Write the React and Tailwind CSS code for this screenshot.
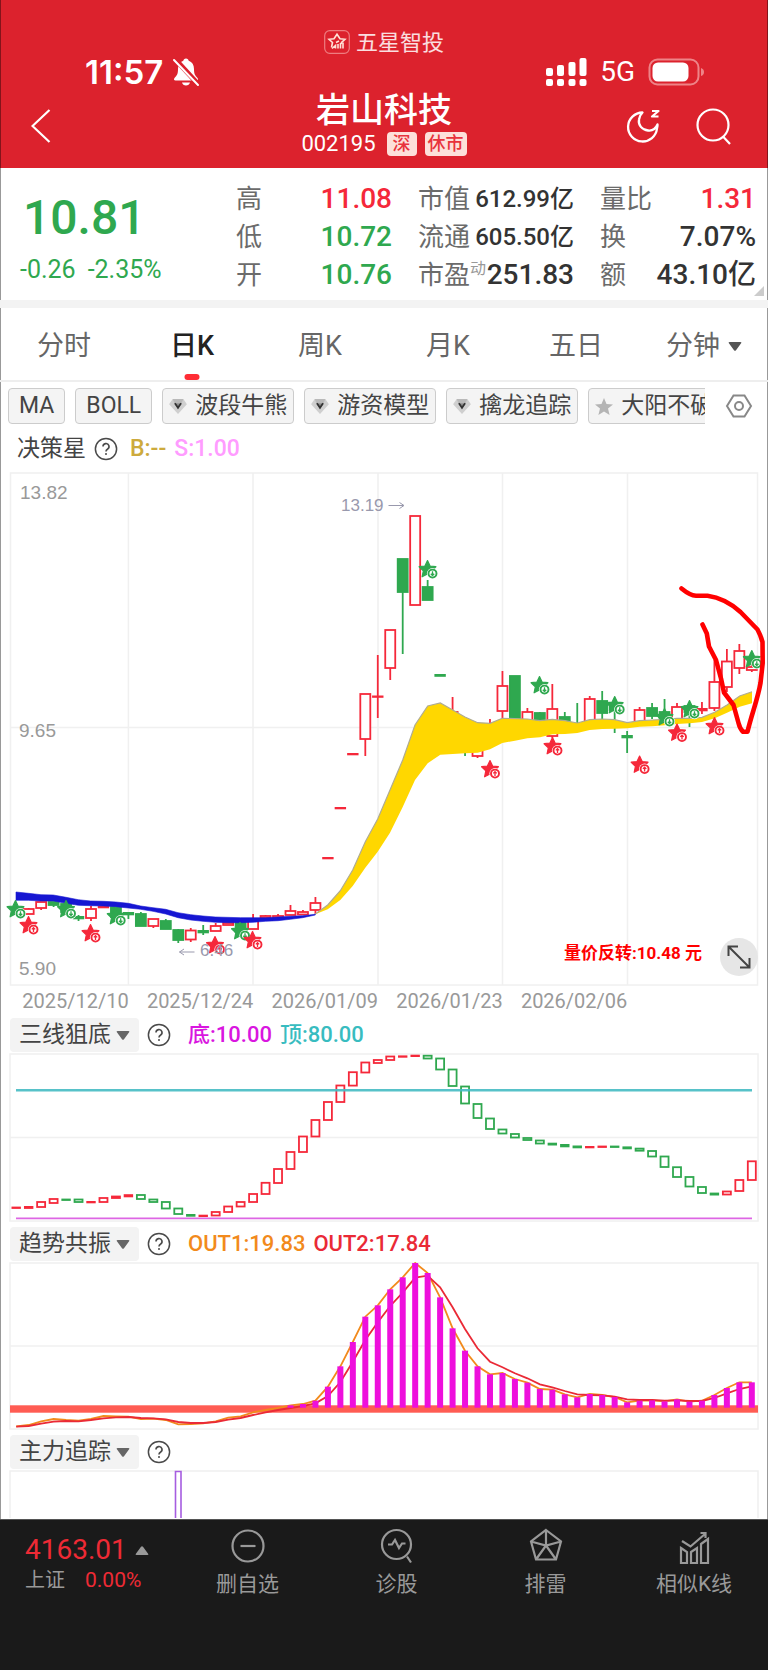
import React, { useState } from 'react';

const RED = '#f5283a';
const GREEN = '#2fa84f';

// x position of the n-th trading day, shared by all charts
const dayX = (i) => 16.2 + i * 12.468;

// [day, body top, body bottom, high, low, color]
const CANDLES = [
  [1, 909, 914, 908, 914, 'r'],
  [2, 902, 908, 902, 910, 'r'],
  [3, 902, 905, 902, 907, 'g'],
  [4, 904, 912, 904, 914, 'g'],
  [5, 917, 918, 915, 921, 'g'],
  [6, 909, 918, 906, 921, 'r'],
  [7, 907, 907, 907, 907, 'r'],
  [8, 907, 917, 907, 917, 'g'],
  [9, 913, 914, 912, 919, 'g'],
  [10, 914, 926, 912, 926, 'g'],
  [11, 919, 926, 919, 928, 'r'],
  [12, 921, 929, 919, 929, 'g'],
  [13, 930, 940, 929, 943, 'g'],
  [14, 930.5, 939.5, 928, 942, 'r'],
  [15, 931, 932, 925, 935, 'g'],
  [16, 926, 931, 923, 931, 'r'],
  [17, 923, 925, 923, 925, 'r'],
  [18, 922, 932, 922, 932, 'g'],
  [19, 919, 929, 914, 929, 'r'],
  [20, 916, 918, 915, 918, 'r'],
  [21, 916, 918, 914, 918, 'r'],
  [22, 911, 915, 905, 915, 'r'],
  [23, 912, 914.5, 910, 915, 'r'],
  [24, 903, 910, 897, 914, 'r'],
  [25, 858, 858, 858, 858, 'r'],
  [26, 808, 808, 808, 808, 'r'],
  [27, 754, 754, 754, 754, 'r'],
  [28, 694, 739, 694, 756, 'r'],
  [29, 696.5, 696.5, 655, 718, 'r'],
  [30, 630, 668, 630, 680, 'r'],
  [31, 559, 592, 559, 654, 'g'],
  [32, 516, 605, 516, 605, 'r'],
  [33, 587, 600, 580, 600, 'g'],
  [34, 675, 675.5, 675, 675, 'g'],
  [35, 712, 725, 697, 725, 'r'],
  [36, 740, 752, 740, 756, 'g'],
  [37, 744, 756, 744, 758, 'r'],
  [38, 727, 732, 719, 732, 'r'],
  [39, 686, 711, 671, 718, 'r'],
  [40, 676, 720, 676, 720, 'g'],
  [41, 712, 722, 708, 722, 'r'],
  [42, 713, 721, 712, 721, 'g'],
  [43, 709, 736, 684, 738, 'r'],
  [44, 717, 724, 712, 724, 'g'],
  [45, 725, 727, 703, 727, 'g'],
  [46, 699, 722, 696, 722, 'r'],
  [47, 701, 713, 691, 719, 'g'],
  [48, 703, 710, 700, 733, 'g'],
  [49, 736, 737, 731, 753, 'g'],
  [50, 710, 724, 707, 724, 'r'],
  [51, 708, 716, 703, 719, 'g'],
  [52, 712, 720, 699, 724, 'g'],
  [53, 707, 722, 703, 722, 'r'],
  [54, 706, 712, 704, 727, 'g'],
  [55, 709, 710, 702, 714, 'r'],
  [56, 682, 708, 660, 711, 'r'],
  [57, 661.5, 687, 649, 692, 'r'],
  [58, 651, 668, 644, 674, 'r'],
  [59, 667, 670, 657, 672, 'r'],
];

// signal stars on the price chart: [x, y, color]
const STARS = [
  [15.5, 909, 'g'], [66, 909, 'g'], [115.7, 916, 'g'], [240, 931, 'g'],
  [28.5, 925, 'r'], [90.5, 933, 'r'], [215, 945, 'r'], [252.5, 940, 'r'],
  [427.5, 569, 'g'], [539.5, 685, 'g'], [614.7, 705, 'g'], [664.5, 717, 'g'],
  [689.5, 709, 'g'], [751.8, 659, 'g'],
  [490, 769, 'r'], [552.5, 746, 'r'], [639.6, 764.5, 'r'], [677, 732.5, 'r'], [714.5, 726, 'r'],
];

const YELLOW_TOP =
  '315.3,914 327.7,905 340.3,890.7 352.7,870 365.3,841.7 377.7,819 390,790 402.7,760 415,725 427.7,706 440.3,703 452.7,710 465,717 477.7,722.7 490,723.3 502.3,718.3 527.3,719 540,720.7 552.3,719.3 565,720.7 577.3,723 589.7,719.7 602.3,719 614.7,719.7 627.3,722.7 639.7,720.7 652.3,720 664.7,719.3 677,718.3 689.7,718.3 702,717.3 714.7,712.3 727,705 739.7,696 752,691.7';
const YELLOW_BOTTOM =
  '752,703.3 739.7,706.7 727,712.7 714.7,718.3 702,722 689.7,723.3 677,724 664.7,725.3 652.3,726.3 639.7,726.7 627.3,728.3 614.7,728.7 602.3,729 589.7,730 577.3,733 565,734 552.3,734.3 540,737.3 527.3,738.3 515,740.7 502.3,743 490,749.3 477.7,752.7 465,753.3 452.7,754 440.3,754.7 427.7,763.3 415,780 402.7,807 390,832.7 377.7,851.7 365.3,867.7 352.7,886 340.3,900 327.7,909.3 315.3,914.3';
const BLUE_BAND =
  '16,892 28.3,893.3 41,894.7 53.3,895 66,897.3 78.3,899.7 90.7,901 103.3,901.3 115.7,902 128.3,903.3 140.7,906 153,907.7 165.7,909.3 178,912.7 190.7,914.7 203,916 215.3,917 240.3,917.7 265.3,917.7 278,917 290.3,916.3 302.7,915.7 315.3,914.3 315.3,915 302.7,917.7 290.3,919.3 278,920.7 265.3,921.3 253,922.3 240.3,922.7 228,922.7 215.3,922.3 203,921.3 190.7,920 178,917.7 165.7,914 153,911.3 140.7,909.3 128.3,908 115.7,906.7 103.3,906 90.7,905.7 78.3,905.3 66,903.3 53.3,901 41,901 28.3,900.3 16,900.3';

// [top, bottom, color] for every day of the second chart
const WAVE = [
  [1207.6, 1207.6, 'r'], [1207, 1207.6, 'r'], [1202, 1207, 'r'], [1199, 1203, 'r'], [1199.6, 1199.6, 'g'],
  [1199.5, 1202, 'g'], [1202, 1202, 'r'], [1198, 1202, 'r'], [1196.5, 1198, 'r'], [1195.2, 1196, 'r'],
  [1195, 1199, 'g'], [1199.5, 1202, 'g'], [1202, 1208.5, 'g'], [1208.5, 1214, 'g'], [1215, 1215.4, 'g'],
  [1215.7, 1215.7, 'r'], [1212, 1215.5, 'r'], [1206.5, 1212, 'r'], [1202, 1206.5, 'r'], [1194, 1202, 'r'],
  [1182.8, 1194, 'r'], [1169, 1183, 'r'], [1152, 1169, 'r'], [1136.5, 1152, 'r'], [1120, 1136.5, 'r'],
  [1102, 1120, 'r'], [1085.5, 1102, 'r'], [1072.2, 1085.6, 'r'], [1062.5, 1072.5, 'r'], [1060, 1063, 'r'],
  [1056.5, 1060, 'r'], [1056.4, 1056.4, 'r'], [1055.7, 1055.7, 'r'], [1055.7, 1058.5, 'g'], [1058.5, 1069.5, 'g'],
  [1069.5, 1086, 'g'], [1086.5, 1103.5, 'g'], [1104, 1118, 'g'], [1118.5, 1129, 'g'], [1129.5, 1133.5, 'g'],
  [1134, 1137.5, 'g'], [1138, 1140, 'g'], [1140.5, 1143.5, 'g'], [1143.7, 1144.2, 'g'], [1145, 1146, 'g'],
  [1146.5, 1147, 'g'], [1147, 1147, 'r'], [1146.6, 1146.6, 'r'], [1146.6, 1146.6, 'g'], [1147.4, 1148, 'g'],
  [1148.6, 1150.7, 'g'], [1151, 1156.5, 'g'], [1156.5, 1167, 'g'], [1167.2, 1177, 'g'], [1177, 1186.5, 'g'],
  [1187, 1193, 'g'], [1193.6, 1194.2, 'g'], [1191.5, 1194.5, 'r'], [1180, 1191, 'r'], [1161.3, 1180, 'r'],
];

// offsets below the top edge of the third chart, one third of a pixel each
const OUT1 = [
  604, 600, 589, 582, 585, 587, 582, 573, 574, 575, 582, 581, 585, 598, 597, 595, 589, 578, 574, 562,
  555, 549, 541, 537, 527, 485, 424, 351, 275, 241, 193, 157, 114, 144, 217, 310, 377, 424, 448, 444,
  462, 473, 492, 494, 508, 517, 507, 510, 516, 532, 527, 526, 529, 523, 530, 527, 510, 489, 472, 472,
];
const OUT2 = [
  605, 603, 596, 590, 588, 589, 585, 580, 577, 576, 579, 580, 583, 591, 594, 594, 591, 584, 579, 570,
  562, 555, 549, 543, 535, 513, 471, 410, 345, 292, 243, 203, 158, 152, 187, 247, 312, 370, 410, 427,
  445, 460, 478, 487, 498, 508, 510, 511, 515, 523, 525, 525, 527, 526, 528, 528, 519, 505, 492, 484,
];
const trendY = (v) => 1225 + v / 3;
const trendLine = (values) => values.map((v, i) => `${dayX(i).toFixed(1)},${trendY(v).toFixed(1)}`).join(' ');

const TABS = ['分时', '日K', '周K', '月K', '五日'];
const MODELS = ['波段牛熊', '游资模型', '擒龙追踪'];
const DATES = ['2025/12/10', '2025/12/24', '2026/01/09', '2026/01/23', '2026/02/06'];
const INDICATORS = ['三线狙底', '趋势共振', '主力追踪'];

const colorOf = (c) => (c === 'r' ? RED : GREEN);

const Caret = ({ className }) => (
  <svg viewBox="0 0 14 9" className={`w-3.5 h-[9px] pointer-events-none ${className}`} aria-hidden="true">
    <path d="M1.5 0h11q1.5 0 .6 1.2L8 8.2q-1 1.2-2 0L.9 1.2Q0 0 1.5 0z" fill="currentColor" />
  </svg>
);

const Help = () => (
  <button type="button" aria-label="说明" className="shrink-0">
    <svg viewBox="0 0 24 24" className="w-6 h-6" fill="none" stroke="#4a4a4a" strokeWidth="1.5">
      <circle cx="12" cy="12" r="10.600" />
      <path d="M9 9.6a3 3 0 1 1 4.4 2.6q-1.4.8-1.4 2.2" strokeWidth="1.6" />
      <circle cx="12" cy="17" r="1" fill="#4a4a4a" stroke="none" />
    </svg>
  </button>
);

const Gem = () => (
  <svg viewBox="0 0 20 18" className="w-[18px] h-4 shrink-0" aria-hidden="true">
    <path d="M4 1h12l4 6-10 11L0 7z" fill="#cfcfcf" />
    <path d="M4 1h12l-2 5H6z" fill="#b9b9b9" />
    <path d="M6 6h8l-4 7z" fill="#8d8d8d" />
    <path d="M6.5 6l3.5 5 3.5-5" fill="none" stroke="#333" strokeWidth="2" />
  </svg>
);

const Star = ({ x, y, color }) => (
  <g transform={`translate(${x} ${y})`}>
    <path
      d="M0-8.500 2.600-3 8.400-2.300 4.200 1.800 5.400 7.800 0 5-5.400 7.800-4.200 1.800-8.400-2.300-2.600-3z"
      fill={color}
      stroke={color}
      strokeWidth="1.200"
      strokeLinejoin="round"
    />
    <circle cx="5" cy="4.600" r="5.600" fill="#fff" />
    <circle cx="5" cy="4.600" r="4" fill="#fff" stroke={color} strokeWidth="1.900" />
    <path
      d={color === RED ? 'M5 7V2.8M3.3 4.4 5 2.6l1.7 1.8' : 'M5 2.2v4.2M3.3 4.8 5 6.6l1.7-1.8'}
      fill="none"
      stroke={color}
      strokeWidth="1.3"
    />
  </g>
);

const Box = ({ x, top, bottom, half, color, filled }) => {
  const height = bottom - top;
  if (height < 1.2) {
    return <rect x={x - half - 0.7} y={top - 1} width={half * 2 + 1.4} height={height + 2.3} fill={color} />;
  }
  return (
    <rect x={x - half} y={top} width={half * 2} height={height} fill={filled ? color : '#fff'} stroke={color} strokeWidth="1.8" />
  );
};

const PriceChart = () => (
  <svg viewBox="0 468 768 520" className="block w-full" role="img" aria-label="日K">
    <g fill="none" stroke="#f0f0f0" strokeWidth="1.5">
      <rect x="10.5" y="473" width="747" height="512" />
      <path d="M10 727.5h747M128.4 473v512M253 473v512M378 473v512M502.5 473v512M627.5 473v512" />
    </g>
    {CANDLES.map(([i, top, bottom, high, low, c]) => (
      <g key={i}>
        <path d={`M${dayX(i)} ${high}V${low}`} stroke={colorOf(c)} strokeWidth="1.8" />
        <Box x={dayX(i)} top={top} bottom={bottom} half={5} color={colorOf(c)} filled={c === 'g'} />
      </g>
    ))}
    {/* trend band */}
    <polygon points={`${YELLOW_TOP} ${YELLOW_BOTTOM}`} fill="#ffd700" />
    <polyline points={YELLOW_TOP} fill="none" stroke="#b0ac90" strokeWidth="1.2" />
    <polygon points={BLUE_BAND} fill="#1616d2" stroke="#1616d2" strokeWidth=".6" />
    {STARS.map(([x, y, c]) => (
      <Star key={`${x}-${y}`} x={x} y={y} color={colorOf(c)} />
    ))}
    <g fontFamily="Liberation Sans, sans-serif" fontSize="19" fill="#999">
      <text x="20" y="499">13.82</text>
      <text x="19" y="737">9.65</text>
      <text x="19" y="975">5.90</text>
    </g>
    <g fontFamily="Liberation Sans, sans-serif" fontSize="17" fill="#9999ad">
      <text x="341" y="511">13.19</text>
      <text x="200" y="956">6.46</text>
    </g>
    <path d="M388.5 505.500h15M399.500 502.500l4.500 3-4.500 3M194.500 952h-15M184 949l-4.500 3 4.500 3" fill="none" stroke="#9999ad" strokeWidth="1" />
    <text x="564" y="959" fontFamily="Roboto, Noto Sans CJK SC, sans-serif" fontSize="17" fontWeight="700" fill="#f00">
      量价反转:10.48 元
    </text>
    {/* hand-drawn mark */}
    <path
      d="M681.500 588.500C687 593 691 595.500 696 595.700L707.500 595.800C720 597.500 731 603.500 740.500 612L757.500 629.500Q760.500 635 762.500 642L762.700 663 760.500 683C757.500 700 752 713 747.500 731.700L743 731.700Q740 729 738.500 723L733.500 705 724 692.500 721 678.500 716 660 709 646.500 706.800 633.500 702.500 624.500"
      fill="none"
      stroke="#f00"
      strokeWidth="4.600"
      strokeLinecap="round"
      strokeLinejoin="round"
    />
  </svg>
);

const WaveChart = () => (
  <svg viewBox="0 1053 768 170" className="block w-full" role="img" aria-label="三线狙底">
    <g fill="none" stroke="#f0f0f0" strokeWidth="1.5">
      <rect x="10" y="1054" width="748" height="167" />
      <path d="M10 1137.5h748" />
    </g>
    {WAVE.map(([top, bottom, c], i) => (
      <Box key={i} x={dayX(i)} top={top} bottom={bottom} half={4} color={colorOf(c)} />
    ))}
    <path d="M16 1090.300h736" stroke="#45bcc4" strokeWidth="2.400" opacity=".9" />
    <path d="M16 1218.400h736" stroke="#dd66e4" strokeWidth="1.700" />
  </svg>
);

const TrendChart = () => (
  <svg viewBox="0 1262 768 168" className="block w-full" role="img" aria-label="趋势共振">
    <g fill="none" stroke="#f0f0f0" strokeWidth="1.5">
      <rect x="10" y="1263" width="748" height="166" />
      <path d="M10 1346h748" />
    </g>
    <rect x="10" y="1405.300" width="748" height="7.400" fill="#ff5c53" />
    <polyline points={trendLine(OUT1)} fill="none" stroke="#f28a1c" strokeWidth="1.800" />
    <polyline points={trendLine(OUT2)} fill="none" stroke="#ea2a36" strokeWidth="1.800" />
    {OUT1.map((v, i) =>
      i < 22 ? null : (
        <rect key={i} x={dayX(i) - 3} y={trendY(v)} width="6" height={1407.7 - trendY(v)} fill="#ee0fdc" />
      )
    )}
  </svg>
);

const IndicatorHeader = ({ name, children }) => {
  const [value, setValue] = useState(name);

  return (
    <div className="flex items-center pl-[10px] h-[34px] text-[22px] leading-[34px]">
      <label className="flex items-center h-[34px] w-[129px] pl-[9px] rounded-sm bg-[#f3f3f3] text-[#444]">
        <select
          aria-label="指标"
          value={value}
          onChange={(e) => setValue(e.target.value)}
          className="appearance-none bg-transparent text-[23px] w-[97px] outline-none"
        >
          {INDICATORS.map((item) => (
            <option key={item}>{item}</option>
          ))}
        </select>
        <Caret className="text-[#666]" />
      </label>
      <div className="flex items-center ml-2 gap-2 font-medium">
        <Help />
        <div className="flex gap-2 pl-[9px]">{children}</div>
      </div>
    </div>
  );
};

const Quote = ({ label, sup, value, className }) => (
  <div className="flex items-center justify-between whitespace-nowrap">
    <dt className="text-[26px] text-[#6b6b6b]">
      {label}
      {sup && <sup className="text-base text-[#999] -top-2.5">{sup}</sup>}
    </dt>
    <dd className={`font-medium ${className}`}>{value}</dd>
  </div>
);

const NavItem = ({ label, children }) => (
  <button type="button" className="flex flex-col items-center gap-1.5 pt-2 text-[#999]">
    <svg viewBox="0 0 36 36" className="w-9 h-9" fill="none" stroke="currentColor" strokeWidth="2.200">
      {children}
    </svg>
    <span className="text-[21px] leading-7">{label}</span>
  </button>
);

const App = () => {
  const [tab, setTab] = useState('日K');

  return (
    <div className="min-h-screen flex flex-col bg-white text-[#333] font-[Roboto,'Noto_Sans_CJK_SC',sans-serif]">
      <header className="bg-[#dc222d] text-white pt-7 pb-3 shadow-[inset_1px_0_#0006,inset_-1px_0_#0006]">
        <div className="flex items-center justify-center gap-1.5 h-7 text-[22px] text-white/85">
          <svg viewBox="0 0 26 24" className="w-[26px] h-6" fill="none" stroke="#ffe3d8">
            <rect x=".7" y=".7" width="24.600" height="22.600" rx="5" stroke="#ee7d80" strokeWidth="1.200" />
            <path d="M7.500 17.500 8.500 12.500 5 9.300l5-.6L13 4.200l3 4.500 5 .6-3.500 3.200.5 1.500M12 12.500l3-1.500" strokeWidth="1.600" />
            <path d="M8 18.500 11.500 15.500v3M14 18.500V14M16.500 18.500V13M19 18.500V12.500" strokeWidth="1.600" />
          </svg>
          五星智投
        </div>

        <div className="flex items-center justify-between h-8 pl-[85px] pr-[63px]">
          <div className="flex items-center gap-[9px]">
            <span className="text-[33px] leading-8 font-semibold font-[Inter,sans-serif]">11:57</span>
            <svg viewBox="0 0 28 30" className="w-7 h-[30px]">
              <path d="M14 1.500c-1.600 0-2.500 1-2.700 2.300C7.800 5 6 8 6 12c0 5-1 6.500-3.500 9-1 1.200-.5 2.500 1 2.500h21c1.500 0 2-1.300 1-2.500C23 18.500 22 17 22 12c0-4-1.800-7-5.300-8.200C16.500 2.500 15.600 1.500 14 1.500zM10 25.500h8c-.5 2-2 3-4 3s-3.500-1-4-3z" fill="#fff" />
              <path d="M3 2 27 28" stroke="#dc222d" strokeWidth="5" />
              <path d="M2 3 26 28" stroke="#fff" strokeWidth="2" strokeLinecap="round" />
            </svg>
          </div>
          <div className="flex items-center gap-[13px]">
            <svg viewBox="0 0 41 30" className="w-[41px] h-[30px]" fill="#fff">
              <rect x="0" y="11" width="7" height="8" rx="2" />
              <rect x="11" y="8" width="7" height="11" rx="2" />
              <rect x="22.500" y="5" width="7" height="14" rx="2" />
              <rect x="33.500" y="1" width="7" height="18" rx="2" />
              <rect x="0" y="22" width="7" height="7" rx="2" />
              <rect x="11" y="22" width="7" height="7" rx="2" />
              <rect x="22.500" y="22" width="7" height="7" rx="2" />
              <rect x="33.500" y="22" width="7" height="7" rx="2" />
            </svg>
            <span className="text-[28px] leading-8">5G</span>
            <svg viewBox="0 0 57 28" className="w-[57px] h-7">
              <rect x="1.500" y="1.500" width="49" height="25" rx="8" fill="none" stroke="#ee8488" strokeWidth="2" />
              <rect x="4.500" y="4.500" width="36" height="19" rx="5.500" fill="#fff" />
              <path d="M53 10q3 1 3 4t-3 4z" fill="#ee8488" />
            </svg>
          </div>
        </div>

        <div className="grid grid-cols-3 items-center px-[31px] mt-1">
          <button type="button" aria-label="返回" className="justify-self-start pt-[3px]">
            <svg viewBox="0 0 20 34" className="w-5 h-[34px]" fill="none" stroke="#fff" strokeWidth="2.200">
              <path d="M18.500 1 1.500 17l17 16" />
            </svg>
          </button>
          <div className="flex flex-col items-center">
            <h1 className="text-[34px] leading-9 font-medium">岩山科技</h1>
            <div className="flex items-center gap-2 mt-1 text-[22px] leading-6">
              <span className="mr-[3px]">002195</span>
              <span className="h-6 px-1.5 rounded bg-[#fde0da] text-[#e8333c] text-lg leading-6 font-medium">深</span>
              <span className="h-6 px-[3px] rounded bg-[#fde0da] text-[#e8333c] text-lg leading-6 font-medium">休市</span>
            </div>
          </div>
          <div className="flex justify-end gap-[34px] pt-1 pr-[5px]">
            <button type="button" aria-label="夜间模式">
              <svg viewBox="0 0 36 36" className="w-9 h-9" fill="none" stroke="#fff" strokeWidth="2.300" strokeLinejoin="round">
                <path d="M16.500 4.500A14.500 14.500 0 1 0 31 20.500c.5-1.500.7-2.500.5-4-2 4.500-6 6.500-9.500 6-6-.5-10-5.500-9-11 .4-3 1.700-5.300 3.500-7z" />
                <path d="M26 3h6.500L26 8.500h6.500" strokeWidth="2.200" />
              </svg>
            </button>
            <button type="button" aria-label="搜索">
              <svg viewBox="0 0 36 38" className="w-9 h-[38px]" fill="none" stroke="#fff" strokeWidth="2.200">
                <circle cx="17" cy="18" r="15.500" />
                <path d="M27 29.500l7 7.500" />
              </svg>
            </button>
          </div>
        </div>
      </header>

      <main className="flex-1 shadow-[inset_1px_0_#999,inset_-1px_0_#999]">
        <section className="relative grid grid-cols-[190fr_156fr_156fr_156fr] gap-x-[26px] pl-5 pr-3 pt-3 pb-1.5 text-[28px] leading-[38px]">
          <div className="text-[#2fa84f]">
            <div className="text-5xl leading-[76px] pl-[3px] font-medium">10.81</div>
            <div className="flex gap-3 text-[25px] leading-[28px]">
              <span>-0.26</span>
              <span>-2.35%</span>
            </div>
          </div>
          <dl>
            <Quote label="高" value="11.08" className="text-[#f5283a]" />
            <Quote label="低" value="10.72" className="text-[#2fa84f]" />
            <Quote label="开" value="10.76" className="text-[#2fa84f]" />
          </dl>
          <dl>
            <Quote label="市值" value="612.99亿" className="text-2xl leading-[38px]" />
            <Quote label="流通" value="605.50亿" className="text-2xl leading-[38px]" />
            <Quote label="市盈" sup="动" value="251.83" className="leading-[38px]" />
          </dl>
          <dl>
            <Quote label="量比" value="1.31" className="text-[#f5283a]" />
            <Quote label="换" value="7.07%" className="leading-[38px]" />
            <Quote label="额" value="43.10亿" className="leading-[38px]" />
          </dl>
          <svg viewBox="0 0 10 10" className="absolute right-1 bottom-1 w-2.5 h-2.5" aria-hidden="true">
            <path d="M10 0v10H0z" fill="#ccc" />
          </svg>
        </section>

        <nav className="grid grid-cols-6 border-t-8 border-t-[#f3f3f3] border-b-2 border-b-[#eee] h-[82px] text-[27px]">
          {TABS.map((name) => (
            <button
              key={name}
              type="button"
              onClick={() => setTab(name)}
              className={`relative pt-1 ${tab === name ? 'font-medium text-[#222]' : 'text-[#666]'}`}
            >
              {name}
              {tab === name && (
                <span className="absolute bottom-0 left-1/2 -translate-x-1/2 w-[15px] h-1.5 rounded-sm bg-[#ff2d35]" />
              )}
            </button>
          ))}
          <label className="flex items-center justify-center gap-2 pt-1 text-[#666]">
            <select aria-label="分钟" className="appearance-none bg-transparent w-[54px] outline-none">
              <option>分钟</option>
            </select>
            <Caret className="text-[#555]" />
          </label>
        </nav>

        <div className="flex items-center pt-1.5 pl-2 pr-[15px]">
          <div className="flex flex-1 gap-[10px] overflow-hidden text-[23px] text-[#444] whitespace-nowrap">
            <button type="button" className="shrink-0 h-9 px-[10px] rounded border border-[#ccc] bg-[#f4f4f4] leading-[34px]">MA</button>
            <button type="button" className="shrink-0 h-9 px-[10px] rounded border border-[#ccc] bg-[#f4f4f4] leading-[34px]">BOLL</button>
            {MODELS.map((name) => (
              <button
                key={name}
                type="button"
                className="shrink-0 flex items-center gap-2 h-9 px-1.5 rounded border border-[#ccc] bg-[#f4f4f4] leading-[34px]"
              >
                <Gem />
                {name}
              </button>
            ))}
            <button
              type="button"
              className="shrink-0 flex items-center gap-2 h-9 px-1.5 rounded border border-[#ccc] bg-[#f4f4f4] leading-[34px]"
            >
              <svg viewBox="0 0 18 17" className="w-[18px] h-[17px]" aria-hidden="true">
                <path d="M9 0l2.500 6 6.500.4-5 4.200L14.600 17 9 13.500 3.400 17 5 10.600 0 6.400 6.500 6z" fill="#b4b4b4" />
              </svg>
              大阳不破
            </button>
          </div>
          <button type="button" aria-label="设置" className="ml-5">
            <svg viewBox="0 0 28 26" className="w-7 h-[26px]" fill="none" stroke="#888" strokeWidth="2">
              <path d="M8.500 2.500h11L26 13l-6.500 10.500h-11L2 13z" />
              <circle cx="14" cy="13" r="4" />
            </svg>
          </button>
        </div>

        <div className="flex items-center h-[44px] pt-1.5 pl-[17px] text-[23px] text-[#444]">
          <span>决策星</span>
          <span className="flex items-center ml-2">
            <Help />
          </span>
          <span className="ml-3 font-medium text-[#cdaa3d]">B:--</span>
          <span className="ml-2 font-medium text-[#ff9cff]">S:1.00</span>
        </div>

        <div className="relative">
          <PriceChart />
          <button
            type="button"
            aria-label="全屏"
            className="absolute right-[10px] bottom-3 flex items-center justify-center w-[38px] h-[38px] rounded-full bg-[#e6e6e6]"
          >
            <svg viewBox="0 0 24 24" className="w-6 h-6" fill="none" stroke="#444" strokeWidth="2">
              <path d="M2 2l20 20M1.500 11V1.500H11M22.500 13v9.500H13" />
            </svg>
          </button>
        </div>

        <div className="grid grid-cols-6 h-[30px] pl-1 pr-4 text-xl leading-[26px] text-right text-[#999]">
          {DATES.map((date) => (
            <span key={date}>{date}</span>
          ))}
        </div>

        <IndicatorHeader name="三线狙底">
          <span className="text-[#d916e0]">底:10.00</span>
          <span className="text-[#38bcc0]">顶:80.00</span>
        </IndicatorHeader>
        <div className="pt-px pb-1">
          <WaveChart />
        </div>

        <IndicatorHeader name="趋势共振">
          <span className="text-[#f28a1c]">OUT1:19.83</span>
          <span className="text-[#ea2a36]">OUT2:17.84</span>
        </IndicatorHeader>
        <div className="pt-px pb-[5px]">
          <TrendChart />
        </div>

        <IndicatorHeader name="主力追踪" />
        <svg viewBox="0 1469 768 49" className="block w-full" role="img" aria-label="主力追踪">
          <path d="M10 1530V1471h748v59" fill="none" stroke="#f0f0f0" strokeWidth="1.500" />
          <path d="M175.500 1530V1471.500h5.500v59" fill="none" stroke="#a65de0" strokeWidth="1.600" />
        </svg>
      </main>

      <footer className="grid grid-cols-[173fr_149fr_149fr_149fr_148fr] h-[151px] items-start bg-[#1a1a1a] border-t border-[#555]">
        <div className="pl-[25px] pt-3">
          <div className="flex items-center gap-2 text-[28px] leading-9 text-[#ee2a35]">
            4163.01
            <Caret className="rotate-180 text-[#999]" />
          </div>
          <div className="flex gap-5 text-xl leading-6 text-[#999]">
            上证 <span className="text-[#ee2a35] text-[21px]">0.00%</span>
          </div>
        </div>
        <NavItem label="删自选">
          <circle cx="18" cy="18" r="15.500" />
          <path d="M10.500 18h15" />
        </NavItem>
        <NavItem label="诊股">
          <circle cx="17.500" cy="16.500" r="14.500" />
          <path d="M9 16.500h4l3-4.500 4 8 3-4.500h3.500M28 28.500l4 6" />
        </NavItem>
        <NavItem label="排雷">
          <path d="M18 2 33 13.500 28 31.500H8L3 13.500zM18 2v15.500M3 13.500l15 4 15-4M8 31.500l10-14 10 14" />
        </NavItem>
        <NavItem label="相似K线">
          <path d="M5 20l6 4v11H5zM15 24l6-4v15h-6zM25 16l7-5v24h-7z" />
          <path d="M6 13l8.500 5.500L29 6M24.500 5h5v5" />
        </NavItem>
      </footer>
    </div>
  );
};

export default App;
